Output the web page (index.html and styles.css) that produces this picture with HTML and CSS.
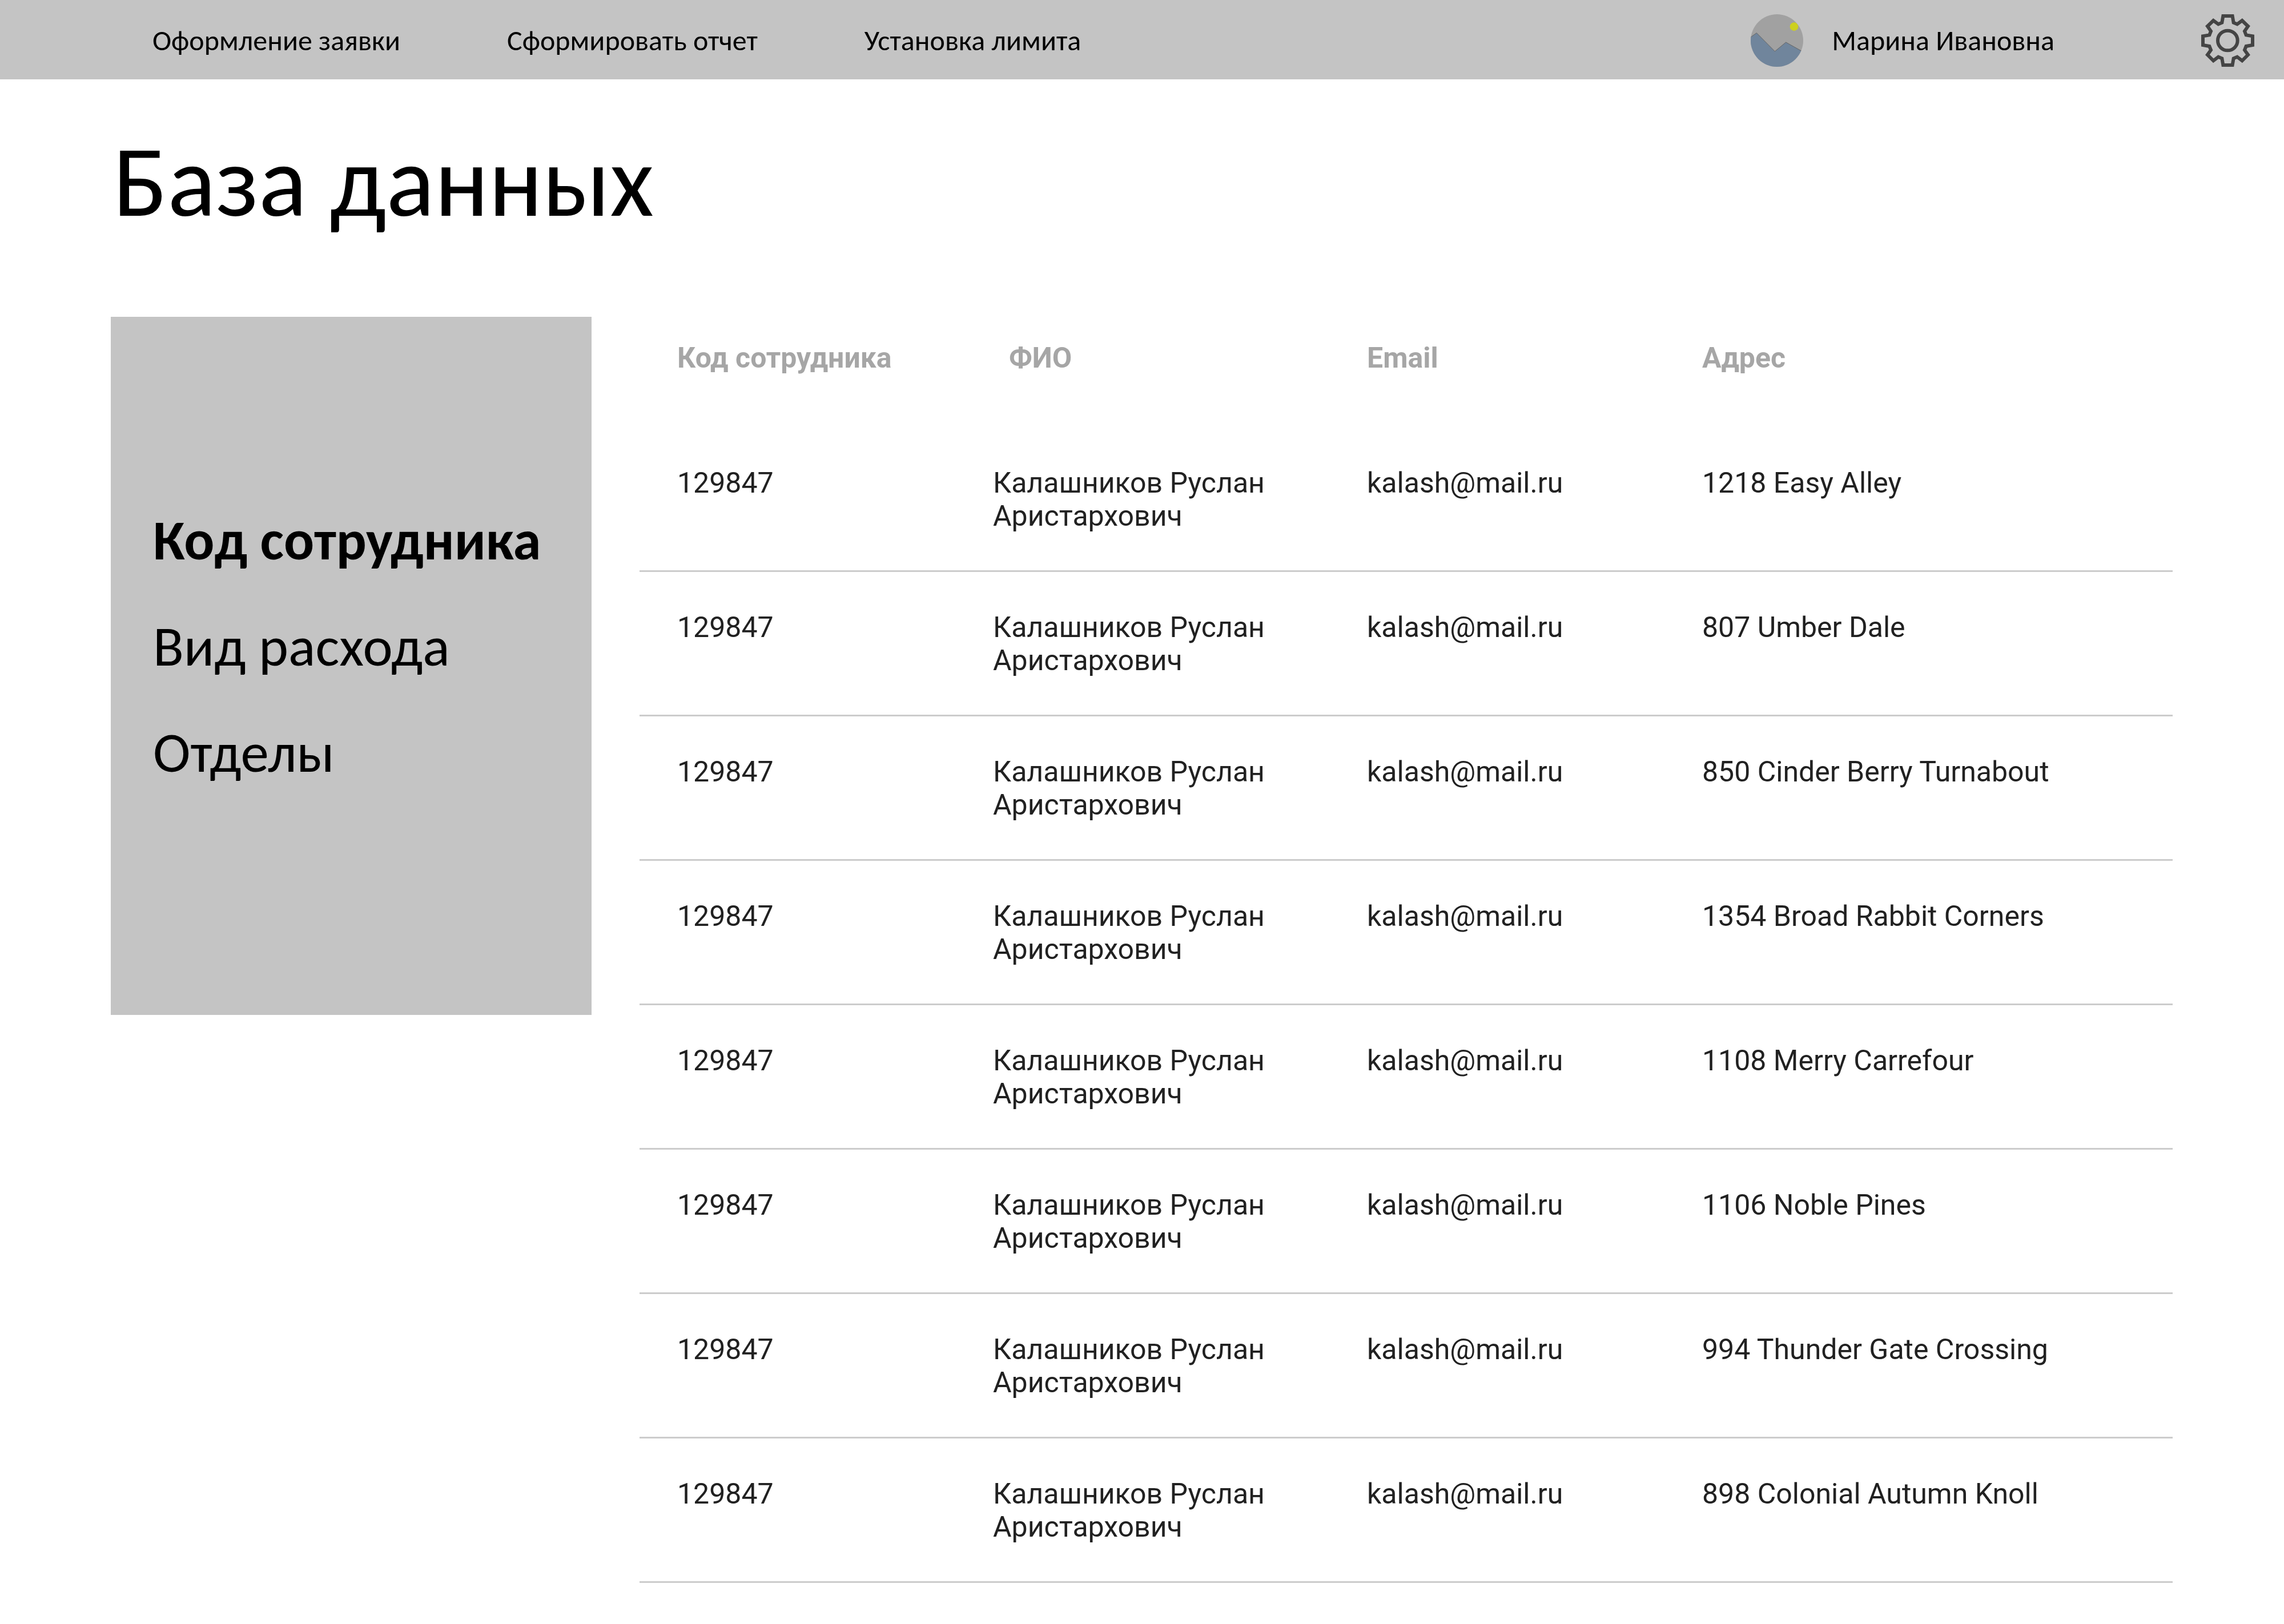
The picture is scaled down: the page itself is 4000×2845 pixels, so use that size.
FILE: index.html
```html
<!DOCTYPE html>
<html lang="ru">
<head>
<meta charset="utf-8">
<meta name="viewport" content="width=device-width, initial-scale=1">
<title>База данных</title>
<link rel="stylesheet" href="styles.css">
</head>
<body>
<header class="topbar">
  <nav class="topnav" aria-label="Главное меню">
    <a href="#request">Оформление заявки</a>
    <a href="#report">Сформировать отчет</a>
    <a href="#limit">Установка лимита</a>
  </nav>
  <div class="user">
    <svg class="avatar" viewBox="0 0 276 276" aria-hidden="true">
      <defs><clipPath id="avatar-clip"><circle cx="138" cy="138" r="138"/></clipPath></defs>
      <g clip-path="url(#avatar-clip)">
        <rect width="276" height="276" fill="#a1a1a1"/>
        <path d="M-8 126 31 98 127 195 185 147 276 198V290H-8Z" fill="#70859c" stroke="#666" stroke-width="3"/>
        <circle cx="228" cy="65" r="22" fill="#cdd01f"/>
      </g>
    </svg>
    <span class="user-name">Марина Ивановна</span>
  </div>
  <button class="settings" type="button" aria-label="Настройки">
    <svg viewBox="0 0 279 276" fill="none" stroke="#444" stroke-width="18" aria-hidden="true">
      <path d="M115 9H164L170 44 189 52 215 33 246 63 228 89 236 109 270 115V162L236 168 228 188 246 213 215 244 189 224 170 232 164 267H115L109 232 90 224 64 244 33 213 51 188 43 168 9 162V115L43 109 51 89 33 63 64 33 90 52 109 44Z"/>
      <circle cx="139" cy="138" r="52"/>
    </svg>
  </button>
</header>
<main class="page">
  <h1>База данных</h1>
  <div class="content">
    <aside class="sidebar">
      <a class="active" href="#code" aria-current="page">Код сотрудника</a>
      <a href="#expense">Вид расхода</a>
      <a href="#departments">Отделы</a>
    </aside>
    <table class="employees">
      <colgroup><col class="c-code"><col class="c-name"><col class="c-email"><col></colgroup>
      <thead>
        <tr><th scope="col">Код сотрудника</th><th class="name" scope="col">ФИО</th><th scope="col">Email</th><th scope="col">Адрес</th></tr>
      </thead>
      <tbody>
        <tr><td>129847</td><td>Калашников Руслан Аристархович</td><td>kalash@mail.ru</td><td>1218 Easy Alley</td></tr>
        <tr><td>129847</td><td>Калашников Руслан Аристархович</td><td>kalash@mail.ru</td><td>807 Umber Dale</td></tr>
        <tr><td>129847</td><td>Калашников Руслан Аристархович</td><td>kalash@mail.ru</td><td>850 Cinder Berry Turnabout</td></tr>
        <tr><td>129847</td><td>Калашников Руслан Аристархович</td><td>kalash@mail.ru</td><td>1354 Broad Rabbit Corners</td></tr>
        <tr><td>129847</td><td>Калашников Руслан Аристархович</td><td>kalash@mail.ru</td><td>1108 Merry Carrefour</td></tr>
        <tr><td>129847</td><td>Калашников Руслан Аристархович</td><td>kalash@mail.ru</td><td>1106 Noble Pines</td></tr>
        <tr><td>129847</td><td>Калашников Руслан Аристархович</td><td>kalash@mail.ru</td><td>994 Thunder Gate Crossing</td></tr>
        <tr><td>129847</td><td>Калашников Руслан Аристархович</td><td>kalash@mail.ru</td><td>898 Colonial Autumn Knoll</td></tr>
      </tbody>
    </table>
  </div>
</main>
</body>
</html>
```
FILE: styles.css
```css
* { box-sizing: border-box; }

body {
  margin: 0;
  background: #fff;
  color: #000;
  font-family: Calibri, Carlito, "Noto Sans", sans-serif;
}

a { color: inherit; text-decoration: none; }

.topbar {
  display: flex;
  align-items: center;
  min-height: 139px;
  padding: 3px 52px 0 267px;
  background: #c4c4c4;
  font-size: 50px;
  line-height: 60px;
}

.topnav { display: flex; gap: 187px; }

.user {
  display: flex;
  align-items: center;
  gap: 50px;
  margin-left: auto;
}

.avatar { width: 92px; height: 92px; }

.settings {
  margin: 0 0 0 257px;
  padding: 0;
  border: 0;
  background: none;
  cursor: pointer;
}

.settings svg { display: block; width: 93px; height: 92px; }

.page { padding: 71px 195px 71px 194px; }

h1 {
  margin: 0 0 129px;
  padding-left: 4px;
  font-size: 177px;
  font-weight: 400;
  line-height: 216px;
}

.content { display: flex; align-items: flex-start; gap: 84px; }

.sidebar {
  display: flex;
  flex: none;
  flex-direction: column;
  gap: 66px;
  width: 842px;
  padding: 332px 74px 399px;
  background: #c4c4c4;
  font-size: 99px;
  line-height: 120px;
  white-space: nowrap;
}

.active { font-weight: 700; }

.employees {
  flex: 1;
  table-layout: fixed;
  border-collapse: separate;
  border-spacing: 0;
  color: #212121;
  font-family: Roboto, sans-serif;
  font-size: 50px;
  line-height: 58px;
  text-align: left;
}

.c-code { width: 619px; }
.c-name { width: 655px; }
.c-email { width: 587px; }

th {
  padding: 43px 0 93px 0;
  color: #a6a6a6;
  font-weight: 700;
}

th.name { padding-left: 28px; }

td {
  padding: 68px 120px 66px 0;
  border-bottom: 3px solid #ccc;
  vertical-align: top;
}

td:not(:nth-child(2)) { padding-right: 0; }

th:first-child,
td:first-child { padding-left: 66px; }
```
